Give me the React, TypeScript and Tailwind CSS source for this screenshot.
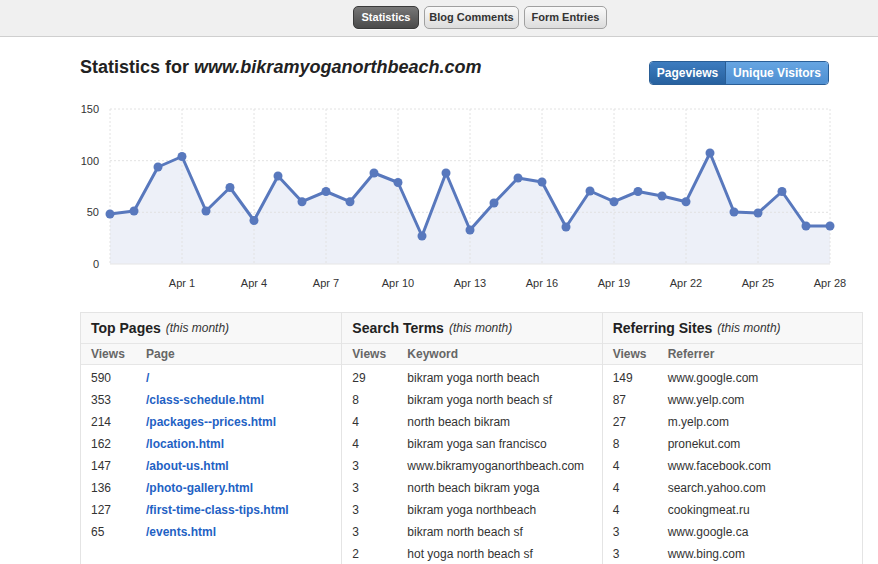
import React from "react";

const pts: [number, number][] = [
  [110, 214], [134, 211], [158, 167], [182, 156.5], [206, 211], [230, 187.5], [254, 220.5],
  [278, 176], [302, 201.7], [326, 191.5], [350, 201.7], [374, 173], [398, 182.5], [422, 236],
  [446, 173], [470, 230], [494, 203], [518, 178], [542, 182], [566, 227], [590, 191],
  [614, 201.7], [638, 191.5], [662, 196], [686, 201.7], [710, 153], [734, 212], [758, 213],
  [782, 191.5], [806, 226], [830, 226],
];

const xLabels = ["Apr 1", "Apr 4", "Apr 7", "Apr 10", "Apr 13", "Apr 16", "Apr 19", "Apr 22", "Apr 25", "Apr 28"];

function Chart() {
  const line = pts.map((p, i) => `${i ? "L" : "M"}${p[0]},${p[1]}`).join(" ");
  const area = `${line} L830,264 L110,264 Z`;
  const vx = [110, 182, 254, 326, 398, 470, 542, 614, 686, 758, 830];
  const hy = [109, 160.7, 212.3];
  return (
    <svg width={878} height={200} viewBox="0 98 878 200" className="block">
      <path d={area} fill="#edf0f8" />
      {vx.map((x) => (
        <line key={x} x1={x} y1={109} x2={x} y2={264} stroke="#e2e2e2" strokeDasharray="2 2" strokeWidth={1} />
      ))}
      {hy.map((y) => (
        <line key={y} x1={110} y1={y} x2={830} y2={y} stroke="#e2e2e2" strokeDasharray="2 2" strokeWidth={1} />
      ))}
      <line x1={110} y1={264} x2={830} y2={264} stroke="#e6e6e6" strokeWidth={1} />
      {[["150", 109], ["100", 160.7], ["50", 212.3], ["0", 264]].map(([t, y]) => (
        <text key={t as string} x={99} y={(y as number) + 4} textAnchor="end" fontSize={11} fill="#333" fontFamily="Liberation Sans, Arial, sans-serif">
          {t}
        </text>
      ))}
      {xLabels.map((t, i) => (
        <text key={t} x={182 + i * 72} y={287} textAnchor="middle" fontSize={11} fill="#333" fontFamily="Liberation Sans, Arial, sans-serif">
          {t}
        </text>
      ))}
      <path d={line} fill="none" stroke="#5878bd" strokeWidth={3} strokeLinejoin="round" />
      {pts.map((p, i) => (
        <circle key={i} cx={p[0]} cy={p[1]} r={4.5} fill="#5878bd" />
      ))}
    </svg>
  );
}

type Col = { title: string; h1: string; h2: string; rows: [string, string][]; link?: boolean };

const cols: Col[] = [
  {
    title: "Top Pages",
    h1: "Views",
    h2: "Page",
    link: true,
    rows: [
      ["590", "/"],
      ["353", "/class-schedule.html"],
      ["214", "/packages--prices.html"],
      ["162", "/location.html"],
      ["147", "/about-us.html"],
      ["136", "/photo-gallery.html"],
      ["127", "/first-time-class-tips.html"],
      ["65", "/events.html"],
    ],
  },
  {
    title: "Search Terms",
    h1: "Views",
    h2: "Keyword",
    rows: [
      ["29", "bikram yoga north beach"],
      ["8", "bikram yoga north beach sf"],
      ["4", "north beach bikram"],
      ["4", "bikram yoga san francisco"],
      ["3", "www.bikramyoganorthbeach.com"],
      ["3", "north beach bikram yoga"],
      ["3", "bikram yoga northbeach"],
      ["3", "bikram north beach sf"],
      ["2", "hot yoga north beach sf"],
    ],
  },
  {
    title: "Referring Sites",
    h1: "Views",
    h2: "Referrer",
    rows: [
      ["149", "www.google.com"],
      ["87", "www.yelp.com"],
      ["27", "m.yelp.com"],
      ["8", "pronekut.com"],
      ["4", "www.facebook.com"],
      ["4", "search.yahoo.com"],
      ["4", "cookingmeat.ru"],
      ["3", "www.google.ca"],
      ["3", "www.bing.com"],
    ],
  },
];

export default function App() {
  return (
    <div className="w-[878px] h-[564px] overflow-hidden bg-white text-[#333]" style={{ fontFamily: "'Liberation Sans', Arial, Helvetica, sans-serif" }}>
      <div className="h-[37px] bg-[#f0f0f0] border-b border-[#cfcfcf] flex items-start pt-[6px] pl-[353px] gap-[5px]">
        <div className="h-[23px] w-[66px] rounded-[5px] border border-[#3a3a3a] bg-gradient-to-b from-[#777] to-[#4a4a4a] text-white text-[11px] font-bold flex items-center justify-center shadow-[0_1px_0_rgba(255,255,255,0.6)]">
          Statistics
        </div>
        <div className="h-[23px] w-[95px] rounded-[5px] border border-[#a0a0a0] bg-gradient-to-b from-[#fafafa] to-[#dcdcdc] text-[#333] text-[11px] font-bold flex items-center justify-center">
          Blog Comments
        </div>
        <div className="h-[23px] w-[83px] rounded-[5px] border border-[#a0a0a0] bg-gradient-to-b from-[#fafafa] to-[#dcdcdc] text-[#333] text-[11px] font-bold flex items-center justify-center">
          Form Entries
        </div>
      </div>

      <div className="flex items-start justify-between pl-[80px] pr-[49px] pt-[19px]">
        <h1 className="text-[18px] font-bold text-[#222] leading-[22px]">
          Statistics for <span className="italic">www.bikramyoganorthbeach.com</span>
        </h1>
        <div className="mt-[5px] flex h-[24px] rounded-[4px] border border-[#2a5e96] overflow-hidden text-[12px] font-bold text-white">
          <div className="w-[76px] flex items-center justify-center bg-gradient-to-b from-[#3d7cbf] to-[#27619f] border-r border-[#2a5e96]">
            Pageviews
          </div>
          <div className="w-[102px] flex items-center justify-center bg-gradient-to-b from-[#66a5e2] to-[#4f8fd1]">
            Unique Visitors
          </div>
        </div>
      </div>

      <div className="mt-[13px]">
        <Chart />
      </div>

      <div className="ml-[80px] mt-[14px] w-[783px] border border-[#e4e4e4] grid grid-cols-3">
        {cols.map((c, ci) => (
          <div key={c.title} className={ci > 0 ? "border-l border-[#e4e4e4]" : ""}>
            <div className="h-[31px] bg-[#f8f8f8] border-b border-[#e6e6e6] px-[10px] flex items-center">
              <span className="text-[14px] font-bold text-[#222]">{c.title}</span>
              <span className="ml-[5px] text-[12px] italic text-[#333]">(this month)</span>
            </div>
            <div className="h-[21px] bg-[#f8f8f8] border-b border-[#e6e6e6] px-[10px] flex items-center text-[12px] font-bold text-[#666]">
              <span className="w-[55px]">{c.h1}</span>
              <span>{c.h2}</span>
            </div>
            <div className="pt-[2px] bg-white">
              {c.rows.map((r, i) => (
                <div key={i} className="h-[22px] px-[10px] flex items-center text-[12px]">
                  <span className="w-[55px] text-[#333]">{r[0]}</span>
                  {c.link ? (
                    <span className="font-bold text-[#1f62c4]">{r[1]}</span>
                  ) : (
                    <span className="text-[#333]">{r[1]}</span>
                  )}
                </div>
              ))}
            </div>
          </div>
        ))}
      </div>
    </div>
  );
}
